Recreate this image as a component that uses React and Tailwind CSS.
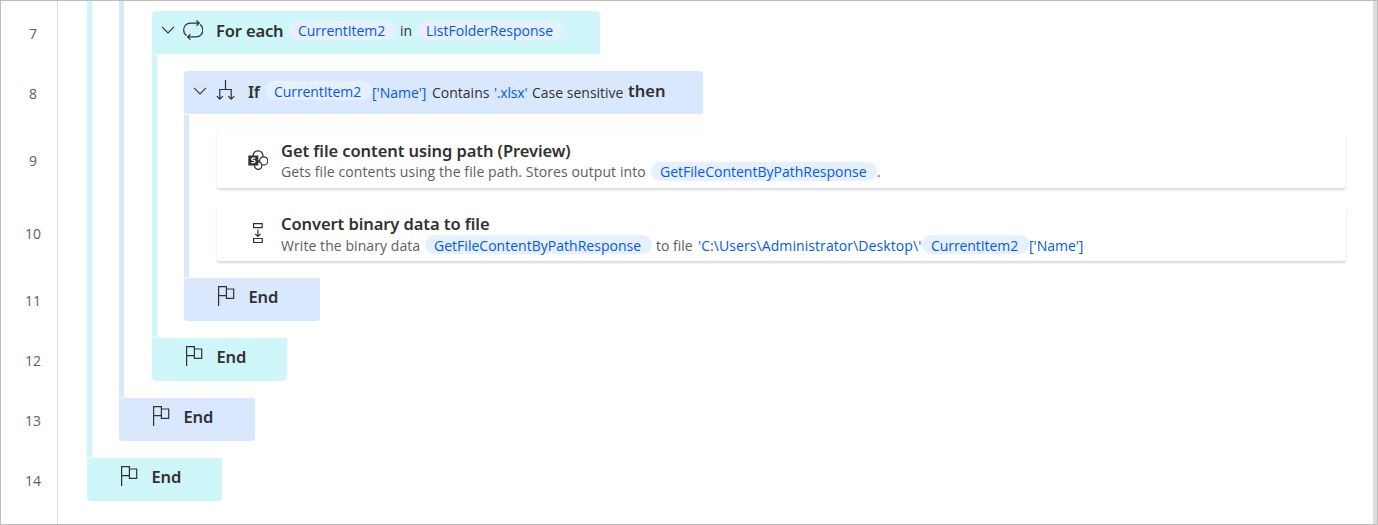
const FONT = "font-['Open_Sans','Noto_Sans',sans-serif]";

const TONES = {
  teal: { fill: "bg-[#cff6f9]", bar: "border-[#cff6f9]" },
  blue: { fill: "bg-[#dae8ff]", bar: "border-[#dae8ff]" },
};

function Bold({ className = "", children }) {
  return (
    <span
      className={
        "block h-6 shrink-0 whitespace-pre font-['Noto_Sans','Open_Sans',sans-serif] text-[16.5px] leading-6 font-semibold text-[#323130] " +
        className
      }
    >
      {children}
    </span>
  );
}

function Text({ raised, className = "", children }) {
  return (
    <span className={"block h-[19px] shrink-0 whitespace-pre leading-[19px] " + (raised ? "" : "pt-px ") + className}>
      {children}
    </span>
  );
}

function Chip({ raised, className = "", children }) {
  return (
    <span
      className={
        "block h-[19px] shrink-0 rounded-full bg-[#e6f0ff] pl-[9px] leading-[19px] whitespace-pre text-[#0058f5] " +
        (raised ? "" : "pt-px ") +
        className
      }
    >
      {children}
    </span>
  );
}

function Icon({ className = "", children }) {
  return (
    <svg
      viewBox="0 0 20 20"
      className={"block size-5 shrink-0 " + className}
      fill="none"
      stroke="#323130"
      strokeWidth="1.2"
    >
      {children}
    </svg>
  );
}

function Chevron({ className = "" }) {
  return (
    <svg viewBox="0 0 14 8" className={"block h-2 w-3.5 shrink-0 " + className} fill="none" stroke="#323130" strokeWidth="1.1">
      <path d="M1 .9 7 6.9 13 .9" />
    </svg>
  );
}

function LoopIcon({ className }) {
  return (
    <Icon className={className}>
      <path d="M3.6 15.6C1.8 14.4.7 12.4.7 10c0-3.9 2.7-6.9 6.7-6.9h8.6M17 4.4c1.8 1.2 2.9 3.2 2.9 5.6 0 3.9-2.7 6.9-6.7 6.9H4.8M13.4.4l2.8 2.7-2.8 2.7M7.4 14.2l-2.8 2.7 2.8 2.7" />
    </Icon>
  );
}

function BranchIcon({ className }) {
  return (
    <Icon className={className}>
      <path d="M9.5 0v9.5M3.8 19V9.5h11.4V19M.8 16.1l3 3 3-3M12.2 16.1l3 3 3-3" />
    </Icon>
  );
}

function FlagIcon({ className }) {
  return (
    <Icon className={className}>
      <path d="M1.6 20V.6h7.8v9H1.6M9.4 3h7.3v9.3H9.4V9.6" />
    </Icon>
  );
}

function SharePointIcon({ className }) {
  return (
    <Icon className={className}>
      <circle cx="10" cy="5.8" r="5" />
      <circle cx="15.7" cy="10.9" r="4.1" fill="#fff" />
      <circle cx="10.2" cy="15.6" r="3.7" fill="#fff" />
      <rect x=".3" y="5.5" width="10" height="10" fill="#323130" stroke="none" />
      <path d="M7.3 8.2H4.9c-1.5 0-1.5 2.2 0 2.2h.9c1.6 0 1.6 2.3 0 2.3H3.2" stroke="#fff" strokeWidth="1.3" />
    </Icon>
  );
}

function ConvertIcon({ className }) {
  return (
    <Icon className={className}>
      <path d="M5.6.6h8.6v4H5.6zM5.6 15.5h8.6v4H5.6zM9.9 6.6v6.8M7.2 10.8l2.7 2.7 2.7-2.7" />
    </Icon>
  );
}

function Block({ tone, header, headerClass = "", bodyClass = "", endClass, children }) {
  const t = TONES[tone];
  return (
    <div className="flex flex-col items-start">
      {header && <div className={"mb-px flex h-[43px] items-start rounded-t " + t.fill + " " + headerClass}>{header}</div>}
      <div className={"w-full border-l-[5px] pb-4 " + t.bar + " " + bodyClass}>{children}</div>
      <div className={"mt-px flex h-[43px] items-start rounded-b pt-[7px] pl-[33px] " + t.fill + " " + endClass}>
        <FlagIcon className="mt-px" />
        <Bold className="ml-[11.5px] tracking-[-0.1px]">End</Bold>
      </div>
    </div>
  );
}

function Card({ icon, title, children }) {
  return (
    <div className="flex h-[55px] w-[1129px] rounded-[3px] bg-white pl-[31px] shadow-[0_1.5px_2.5px_rgba(0,0,0,0.15)]">
      {icon}
      <div className="ml-[13px] flex flex-col pt-[6px]">
        <Bold className="tracking-[-0.08px]">{title}</Bold>
        <div className="-mt-px flex">{children}</div>
      </div>
    </div>
  );
}

function LineNumber({ className = "", children }) {
  return <div className={"h-5 text-center leading-5 " + className}>{children}</div>;
}

export default function App() {
  return (
    <div className={"flex h-[525px] w-[1378px] overflow-hidden border border-[#bdbdbd] bg-white text-[14px] text-[#605e5c] " + FONT}>
      <div className="w-[57px] shrink-0 border-r border-[#dcdcdc] pt-[23px] pl-[8px] text-[14px]">
        <LineNumber>7</LineNumber>
        <LineNumber className="mt-10">8</LineNumber>
        <LineNumber className="mt-[47px]">9</LineNumber>
        <LineNumber className="mt-[53px]">10</LineNumber>
        <LineNumber className="mt-[47px]">11</LineNumber>
        <LineNumber className="mt-10">12</LineNumber>
        <LineNumber className="mt-10">13</LineNumber>
        <LineNumber className="mt-10">14</LineNumber>
      </div>

      <div className="flex-1 pl-[29px]">
        <Block tone="teal" bodyClass="pl-[27px]" endClass="w-[135px]">
          <Block tone="blue" bodyClass="pt-[10px] pl-7" endClass="w-[136px]">
            <Block
              tone="teal"
              headerClass="w-[448px] pl-[9px]"
              bodyClass="pt-4 pl-[27px]"
              endClass="w-[135px]"
              header={
                <>
                  <Chevron className="mt-[15px]" />
                  <LoopIcon className="mt-[9px] ml-2" />
                  <Bold className="mt-2 ml-[13px] w-[73px] tracking-[-0.15px]">For each</Bold>
                  <Chip raised className="mt-[10px] w-[107px] tracking-[-0.08px]">CurrentItem2</Chip>
                  <Text raised className="mt-[10px] ml-1 w-[17px] text-[#323130]">in</Text>
                  <Chip raised className="mt-[10px] w-[146px]">ListFolderResponse</Chip>
                </>
              }
            >
              <Block
                tone="blue"
                headerClass="w-[519px] pl-[9px]"
                bodyClass="pt-[18px] pl-7"
                endClass="w-[136px]"
                header={
                  <>
                    <Chevron className="mt-4" />
                    <BranchIcon className="mt-[9px] ml-[9px]" />
                    <Bold className="mt-[9px] ml-3 w-[17px] tracking-[-0.3px]">If</Bold>
                    <Chip className="mt-[10px] w-[107px] tracking-[-0.08px]">CurrentItem2</Chip>
                    <Text className="mt-[11px] w-[60px] text-[#0058f5]">['Name']</Text>
                    <Text className="mt-[11px] w-[62px] text-[#323130]">Contains</Text>
                    <Text className="mt-[11px] w-[38px] tracking-[-0.2px] text-[#0058f5]">'.xlsx'</Text>
                    <Text className="mt-[11px] w-[96px] text-[#323130]">Case sensitive</Text>
                    <Bold className="mt-2">then</Bold>
                  </>
                }
              >
                <div className="flex flex-col gap-[18px]">
                  <Card icon={<SharePointIcon className="mt-[17px]" />} title="Get file content using path (Preview)">
                    <Text raised className="w-[370px] tracking-[0.09px]">
                      Gets file contents using the file path. Stores output into
                    </Text>
                    <Chip raised className="w-[226px]">GetFileContentByPathResponse</Chip>
                    <Text raised>.</Text>
                  </Card>
                  <Card icon={<ConvertIcon className="mt-[17px]" />} title="Convert binary data to file">
                    <Text className="w-[144px] tracking-[0.07px]">Write the binary data</Text>
                    <Chip className="w-[227px] tracking-[0.02px]">GetFileContentByPathResponse</Chip>
                    <Text className="ml-[4px] w-[42px]">to file</Text>
                    <Text className="w-[224px] tracking-[0.08px] text-[#0058f5]">{"'C:\\Users\\Administrator\\Desktop\\'"}</Text>
                    <Chip className="w-[107px] tracking-[-0.08px]">CurrentItem2</Chip>
                    <Text className="text-[#0058f5]">['Name']</Text>
                  </Card>
                </div>
              </Block>
            </Block>
          </Block>
        </Block>
      </div>
      <div className="w-1 shrink-0 bg-[#dedddc]" />
    </div>
  );
}
